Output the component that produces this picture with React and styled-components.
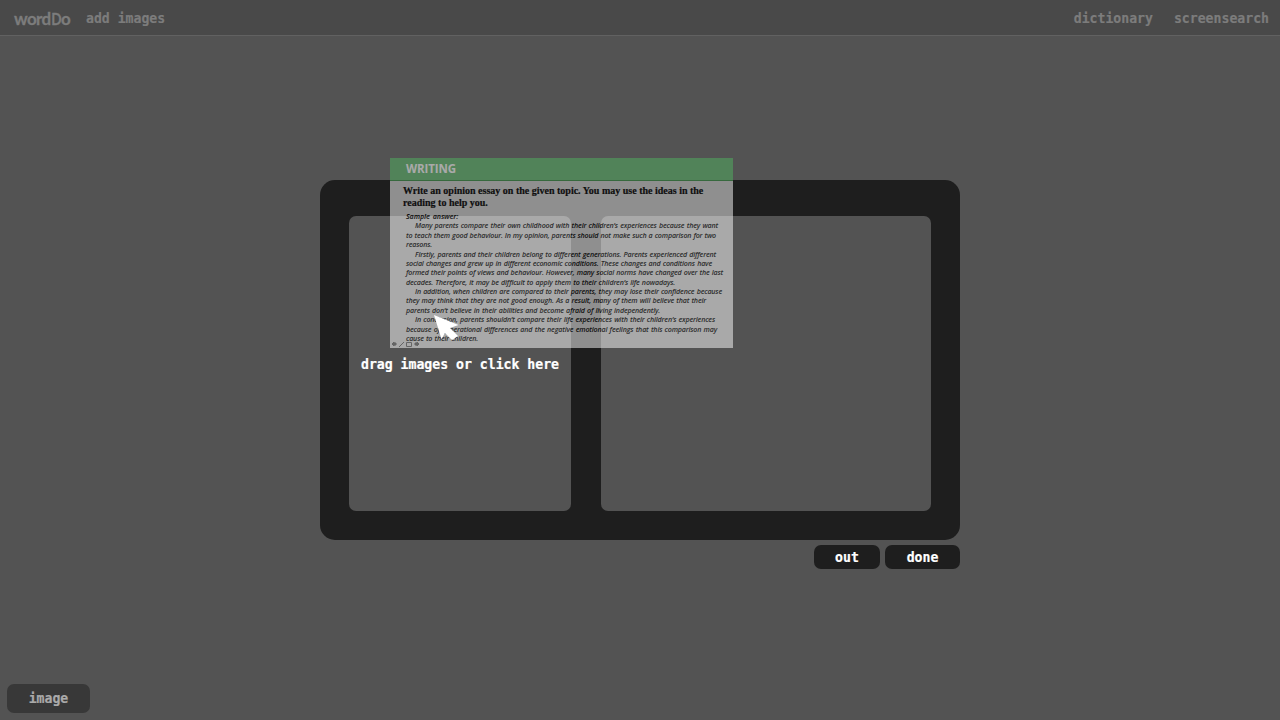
import React from 'react';
import styled, { createGlobalStyle } from 'styled-components';

const Global = createGlobalStyle`
  * { box-sizing: border-box; }
  body { margin: 0; background: #535353; overflow: hidden; }
`;
const Page = styled.div`
  height: 720px;
  display: flex;
  flex-direction: column;
  position: relative;
  font: bold 13.17px/18px "DejaVu Sans Mono", monospace;
  -webkit-text-stroke: 0.2px currentColor;
`;
const Header = styled.header`
  height: 36px;
  flex: none;
  display: flex;
  align-items: center;
  padding: 3px 11px 0 14px;
  background: #494949;
  border-bottom: 1px solid #616161;
  color: #7c7c7c;
`;
const Logo = styled.div`
  width: 72px;
  display: flex;
  align-items: baseline;
  font: 700 17px/20px Lato, sans-serif;
  letter-spacing: -0.6px;
  -webkit-text-stroke: 0.3px currentColor;
`;
const Tall = styled.span`
  display: inline-block;
  transform: scaleX(0.8);
  margin: 0 -1px 0 -1px;
`;
const Nav = styled.nav`
  margin-left: auto;
  display: flex;
  gap: 21px;
`;
const Main = styled.main`
  flex: 1;
  padding-top: 144px;
  display: flex;
  flex-direction: column;
  align-items: center;
`;
const Dialog = styled.section`
  width: 640px;
  height: 360px;
  padding: 36px 29px 29px;
  display: flex;
  gap: 30px;
  border-radius: 15px;
  background: #1e1e1e;
`;
const Panel = styled.div`
  width: ${p => p.$width}px;
  padding-top: 2px;
  border-radius: 7px;
  background: #535353;
  display: flex;
  align-items: center;
  justify-content: center;
  white-space: nowrap;
  color: #fff;
`;
const Actions = styled.div`
  width: 640px;
  margin-top: 5px;
  display: flex;
  justify-content: flex-end;
  gap: 5px;
`;
const Button = styled.button`
  width: ${p => p.$width}px;
  height: 24px;
  padding: 2px 0 0;
  border: 0;
  border-radius: 7px;
  background: #1e1e1e;
  color: #fff;
  font: inherit;
`;
const Footer = styled.footer`
  padding: 0 0 7px 7px;
`;
const ImageButton = styled(Button)`
  height: 29px;
  padding: 0;
  background: #383838;
  color: #aaa;
`;
const Dragged = styled.article`
  position: absolute;
  left: 390px;
  top: 158px;
  width: 343px;
  height: 190px;
  overflow: hidden;
  opacity: 0.5;
  background: #fff;
  color: #000;
  -webkit-text-stroke: 0;
`;
const Banner = styled.div`
  height: 23px;
  padding-left: 16px;
  background: #51b35f;
  color: #fff;
  font: bold 11.5px/22px "Open Sans", sans-serif;
  letter-spacing: -0.1px;
`;
const Prompt = styled.div`
  padding: 4px 0 0 13px;
  font: bold 10px/12px "Liberation Serif", serif;
  -webkit-text-stroke: 0.2px #000;
`;
const Essay = styled.div`
  padding: 3px 0 0 16px;
  font: italic 600 7.1px/9.37px "Open Sans", sans-serif;
  letter-spacing: -0.16px;
  word-spacing: -0.3px;
`;
const Line = styled.div`
  width: ${p => p.$width}px;
  margin-left: ${p => (p.$indent ? 9 : 0)}px;
  white-space: nowrap;
  text-align: justify;
  text-align-last: justify;
  font-weight: ${p => (p.$bold ? 700 : 600)};
`;
const Tools = styled.svg`
  position: absolute;
  left: 0;
  bottom: 0;
`;
const Cursor = styled.svg`
  position: absolute;
  left: 432px;
  top: 313px;
`;

const lines = [
  ['Sample answer:', 52, false, true],
  ['Many parents compare their own childhood with their children’s experiences because they want', 303, true],
  ['to teach them good behaviour. In my opinion, parents should not make such a comparison for two', 310],
  ['reasons.', 27],
  ['Firstly, parents and their children belong to different generations. Parents experienced different', 301, true],
  ['social changes and grew up in different economic conditions. These changes and conditions have', 306],
  ['formed their points of views and behaviour. However, many social norms have changed over the last', 317],
  ['decades. Therefore, it may be difficult to apply them to their children’s life nowadays.', 269],
  ['In addition, when children are compared to their parents, they may lose their confidence because', 307, true],
  ['they may think that they are not good enough. As a result, many of them will believe that their', 300],
  ['parents don’t believe in their abilities and become afraid of living independently.', 254],
  ['In conclusion, parents shouldn’t compare their life experiences with their children’s experiences', 300, true],
  ['because of generational differences and the negative emotional feelings that this comparison may', 311],
  ['cause to their children.', 72],
];

export default function App() {
  return (
    <Page>
      <Global />
      <Header>
        <Logo>word<Tall>D</Tall>o</Logo>
        <span>add images</span>
        <Nav><span>dictionary</span><span>screensearch</span></Nav>
      </Header>
      <Main>
        <Dialog>
          <Panel $width={222}>drag images or click here</Panel>
          <Panel $width={330} />
        </Dialog>
        <Actions>
          <Button $width={66}>out</Button>
          <Button $width={75}>done</Button>
        </Actions>
      </Main>
      <Footer><ImageButton $width={83}>image</ImageButton></Footer>
      <Dragged>
        <Banner>WRITING</Banner>
        <Prompt>Write an opinion essay on the given topic. You may use the ideas in the<br />reading to help you.</Prompt>
        <Essay>
          {lines.map(([text, width, indent, bold]) => (
            <Line key={text} $width={width} $indent={indent} $bold={bold}>{text}</Line>
          ))}
        </Essay>
        <Tools width="32" height="8" fill="#777" stroke="#777">
          <path d="M2 4l2-2v1h2v2H4v1zM9 7l5-5M29 4l-2-2v1h-2v2h2v1z" />
          <path fill="none" d="M16.500 2.500h5v4h-5z" />
        </Tools>
      </Dragged>
      <Cursor width="28" height="28" viewBox="0 0 28 28">
        <path fill="#fff" d="M2 2L26.500 12L18 15L26 23L20 27L13 20L9.500 26Z" />
      </Cursor>
    </Page>
  );
}
